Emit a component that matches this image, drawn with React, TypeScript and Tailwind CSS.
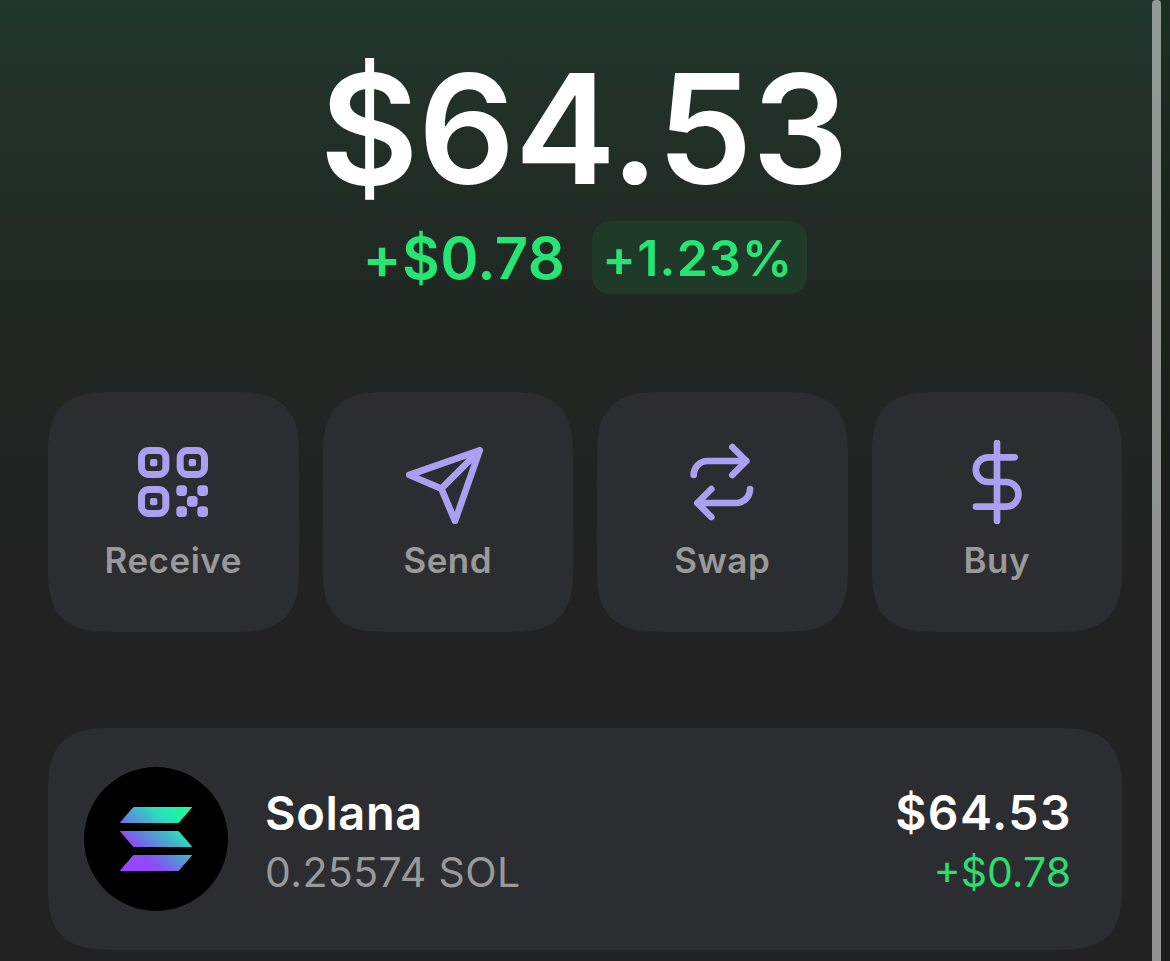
import type { ReactNode } from 'react';

const ACTIONS: { label: string; icon: ReactNode }[] = [
  { label: 'Receive', icon: <QrIcon /> },
  { label: 'Send', icon: <SendIcon /> },
  { label: 'Swap', icon: <SwapIcon /> },
  { label: 'Buy', icon: <DollarIcon /> },
];

function StrokeIcon({ children }: { children: ReactNode }) {
  return (
    <svg
      viewBox="0 0 252 252"
      className="size-[84px]"
      fill="none"
      stroke="currentColor"
      strokeWidth={20}
      strokeLinecap="round"
      strokeLinejoin="round"
    >
      {children}
    </svg>
  );
}

function QrIcon() {
  return (
    <svg viewBox="-21 -21 252 252" className="size-[84px]" fill="currentColor">
      {[
        [0, 0],
        [116, 0],
        [0, 117],
      ].map(([x, y]) => (
        <g key={`${x}-${y}`}>
          <rect x={x + 10.5} y={y + 10.5} width={73} height={72} rx={22} fill="none" stroke="currentColor" strokeWidth={21} />
          <rect x={x + 36} y={y + 36} width={22} height={22} rx={6} />
        </g>
      ))}
      {[
        [115, 115],
        [178, 115],
        [147, 147],
        [115, 178],
        [178, 178],
      ].map(([x, y]) => (
        <rect key={`${x}-${y}`} x={x} y={y} width={32} height={32} rx={11} />
      ))}
    </svg>
  );
}

function SendIcon() {
  return (
    <StrokeIcon>
      <path d="M221 31 10 105l96 41 41 97ZM221 31 106 146" />
    </StrokeIcon>
  );
}

function SwapIcon() {
  return (
    <StrokeIcon>
      <path d="M41 105a42 42 0 0 1 42-42h116M157 21l42 42-42 42" />
      <path d="M210 147a42 42 0 0 1-42 42H52M94 147l-42 42 42 42" />
    </StrokeIcon>
  );
}

function DollarIcon() {
  return (
    <StrokeIcon>
      <path d="M126 9v234M179 52h-79.500a37 37 0 0 0 0 74h54a37 37 0 0 1 0 74H63" />
    </StrokeIcon>
  );
}

function SolanaLogo() {
  return (
    <div className="flex size-36 items-center justify-center rounded-full bg-black">
      <svg viewBox="0 0 72 64" className="h-16 w-[72px]" fill="url(#sol)" stroke="url(#sol)" strokeLinejoin="round">
        <defs>
          <linearGradient id="sol" gradientUnits="userSpaceOnUse" x1="6" y1="66" x2="66" y2="-2">
            <stop offset="0.08" stopColor="#9945FF" />
            <stop offset="0.3" stopColor="#8752F3" />
            <stop offset="0.5" stopColor="#5497D5" />
            <stop offset="0.6" stopColor="#43B4CA" />
            <stop offset="0.72" stopColor="#28E0B9" />
            <stop offset="0.97" stopColor="#19FB9B" />
          </linearGradient>
        </defs>
        <path d="M13.500.5h58L58.500 15.500H.5ZM.5 24.500h58l13 15h-58ZM13.500 48.500h58l-13 15H.5Z" />
      </svg>
    </div>
  );
}

export default function App() {
  return (
    <div className="flex h-[961px] w-[1170px] overflow-hidden bg-[linear-gradient(to_bottom,#21372b_0%,#212b25_22%,#212623_38%,#222222_58%)] font-['Inter',sans-serif]">
      <main className="flex w-[1152px] shrink-0 flex-col pr-[30px] pl-12">
        <header className="flex h-[392px] flex-col items-center">
          <h1 className="mt-[39px] mr-0.5 h-[182px] text-[152px] leading-[180px] font-[570] tracking-[-0.5px] whitespace-nowrap text-white">
            $64.53
          </h1>
          <div className="flex h-[73px] items-center gap-[27px] text-[#26e572]">
            <span className="pt-px text-[58px] leading-[73px] font-semibold tracking-[0.4px]">+$0.78</span>
            <span className="flex h-[73px] w-[215px] items-center justify-center rounded-[18px] bg-[#203a2a] pt-px pr-1 text-[50px] font-semibold tracking-[1.2px]">
              +1.23%
            </span>
          </div>
        </header>

        <nav className="grid grid-cols-4 gap-6">
          {ACTIONS.map(({ label, icon }) => (
            <button
              key={label}
              type="button"
              className="flex h-60 flex-col items-center rounded-[65px] bg-[#2c2d30] pt-12 text-[#ab9ff2] [corner-shape:superellipse(1.5)]"
            >
              {icon}
              <span className="mt-3.5 text-[35px] leading-[44px] font-semibold tracking-[0.5px] text-[#999999]">{label}</span>
            </button>
          ))}
        </nav>

        <section className="mt-24 flex h-[222px] items-center rounded-[65px] bg-[#2c2d30] pr-[52px] pl-9 [corner-shape:superellipse(1.5)]">
          <SolanaLogo />
          <div className="ml-[37px] flex-1 pt-[5px] whitespace-nowrap">
            <p className="text-[47px] leading-[60px] font-semibold tracking-[0.6px] text-white">Solana</p>
            <p className="text-[41px] leading-[58px] tracking-[0.4px] text-[#999999]">0.25574 SOL</p>
          </div>
          <div className="pt-[5px] text-right whitespace-nowrap">
            <p className="-mr-[2px] text-[48px] leading-[60px] font-semibold tracking-[1.5px] text-white">$64.53</p>
            <p className="-mr-px text-[41px] leading-[58px] text-[#2cdd70]">+$0.78</p>
          </div>
        </section>
      </main>
      <div className="h-full w-[9px] rounded-t-[4px] bg-white/50" />
      <div className="h-full w-[9px] bg-black/15" />
    </div>
  );
}
